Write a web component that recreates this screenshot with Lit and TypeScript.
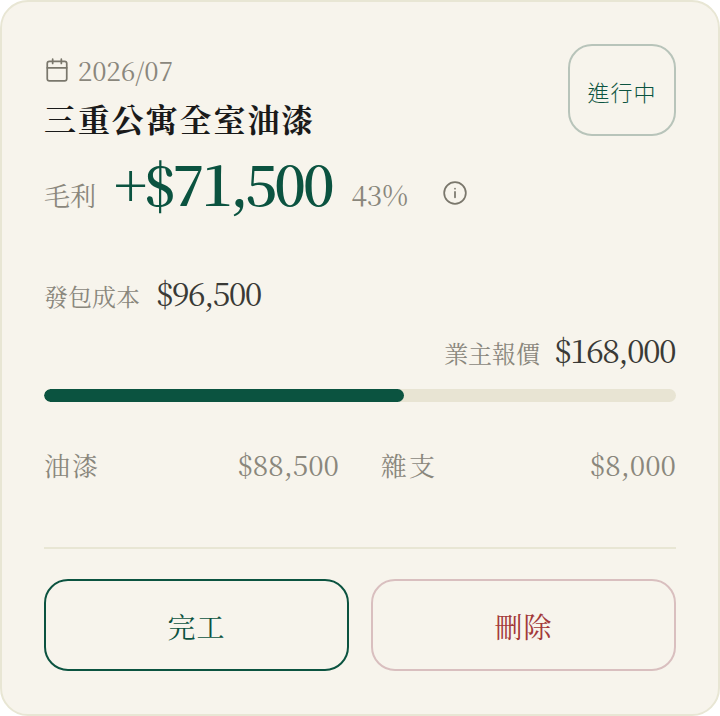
import { LitElement, html, css } from "lit";
import { customElement } from "lit/decorators.js";

@customElement("app-root")
export class AppRoot extends LitElement {
  static styles = css`
    :host { display: block; width: 720px; height: 716px; font-family: "Noto Serif CJK TC", "Liberation Serif", "Noto Sans CJK TC", serif; }
    .card { box-sizing: border-box; width: 720px; height: 716px; background: #f7f4ec; border: 2px solid #e8e6d4; border-radius: 28px; padding: 42px; display: flex; flex-direction: column; }
    .top { display: flex; justify-content: space-between; align-items: flex-start; }
    .left { padding-top: 8px; }
    .date { display: flex; align-items: center; gap: 8px; font-size: 26px; color: #8a877c; line-height: 36px; height: 36px; }
    .date svg { display: block; margin-bottom: 1px; }
    .title { font-size: 32px; font-weight: 700; letter-spacing: 1.9px; color: #1a1a1a; line-height: 48px; margin-top: 6px; }
    .badge { box-sizing: border-box; width: 108px; height: 92px; border: 2px solid #b8c4ba; border-radius: 24px; display: flex; align-items: center; justify-content: center; color: #0b5340; font-family: "Noto Sans CJK TC", sans-serif; font-size: 22px; font-weight: 300; letter-spacing: 1px; padding-top: 2px; }
    .profit { display: flex; align-items: baseline; height: 76px; margin-top: 8px; line-height: 64px; }
    .l { font-size: 24px; color: #8a877c; }
    .profit .l { font-size: 26px; }
    .amt { font-size: 56px; letter-spacing: -0.06em; color: #0b5340; font-weight: 600; margin-left: 18px; }
    .pct { font-size: 28px; color: #8a877c; margin-left: 20px; }
    .info { margin-left: 34px; margin-top: 10px; align-self: center; display: block; }
    .cost { display: flex; align-items: baseline; gap: 16px; margin-top: 48px; line-height: 36px; }
    .v { font-size: 32px; letter-spacing: -0.05em; color: #3a3a36; }
    .quote { display: flex; justify-content: flex-end; align-items: baseline; gap: 14px; margin-top: 17px; line-height: 36px; }
    .quote .v { margin-right: 1px; }
    .track { height: 13px; border-radius: 7px; background: #e8e4d3; margin-top: 18px; overflow: hidden; }
    .fill { height: 100%; border-radius: 7px; background: #0b5340; }
    .rows { display: grid; grid-template-columns: 1fr 1fr; gap: 42px; margin-top: 44px; line-height: 36px; }
    .row { display: flex; justify-content: space-between; align-items: baseline; color: #8a877c; }
    .row .n { font-size: 26px; letter-spacing: 2px; }
    .row .m { font-size: 28px; }
    .sep { height: 2px; background: #e8e6d4; margin-top: 64px; }
    .btns { display: grid; grid-template-columns: 1fr 1fr; gap: 22px; margin-top: 30px; }
    .btn { box-sizing: border-box; height: 92px; border-radius: 24px; display: flex; align-items: center; justify-content: center; font-size: 28px; letter-spacing: 1px; padding-top: 2px; }
    .done { border: 2px solid #0b5340; color: #0b5340; }
    .del { border: 2px solid #d9bfbf; color: #a33a3a; }
  `;
  render() {
    return html`<div class="card">
      <div class="top"><div class="left">
        <div class="date"><svg width="26" height="26" viewBox="0 0 24 24" fill="none" stroke="#7a776c" stroke-width="1.6" stroke-linecap="round" stroke-linejoin="round"><path d="M8 2v4M16 2v4"/><rect x="3" y="4" width="18" height="18" rx="2"/><path d="M3 10h18"/></svg><span>2026/07</span></div>
        <div class="title">三重公寓全室油漆</div>
      </div><div class="badge">進行中</div></div>
      <div class="profit"><span class="l">毛利</span><span class="amt">+$71,500</span><span class="pct">43%</span>
        <svg class="info" width="26" height="26" viewBox="0 0 24 24" fill="none" stroke="#7a776c" stroke-width="1.6" stroke-linecap="round"><circle cx="12" cy="12" r="10"/><path d="M12 16v-5M12 8h.01"/></svg></div>
      <div class="cost"><span class="l">發包成本</span><span class="v">$96,500</span></div>
      <div class="quote"><span class="l">業主報價</span><span class="v">$168,000</span></div>
      <div class="track"><div class="fill" style="width:57%"></div></div>
      <div class="rows"><div class="row"><span class="n">油漆</span><span class="m">$88,500</span></div><div class="row"><span class="n">雜支</span><span class="m">$8,000</span></div></div>
      <div class="sep"></div>
      <div class="btns"><div class="btn done">完工</div><div class="btn del">刪除</div></div>
    </div>`;
  }
}
